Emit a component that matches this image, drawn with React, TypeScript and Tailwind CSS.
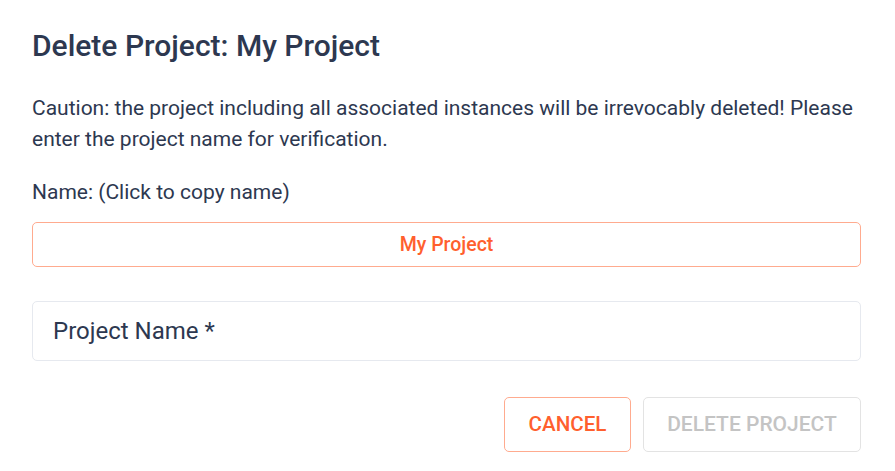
export default function App() {
    return (
        <div
            className="min-h-[471px] w-[895px] bg-white pl-8 pr-[34px] pt-[28px] text-[#2d3850]"
            style={{ fontFamily: "Roboto, 'Liberation Sans', sans-serif" }}
        >
            <h2 className="text-[30px] font-medium leading-[36px]">Delete Project: My Project</h2>

            <p className="mt-[29px] text-[21px] leading-[31px]">
                Caution: the project including all associated instances will be irrevocably deleted! Please
                enter the project name for verification.
            </p>

            <p className="mt-[25px] text-[21px] leading-[24px]">Name: (Click to copy name)</p>

            <button className="mt-[18px] flex h-[45px] w-full items-center justify-center rounded-[5px] border border-[#ffab8f] text-[19.5px] font-medium text-[#ff5f2e]">
                My Project
            </button>

            <div className="mt-[34px] flex h-[60px] w-full items-center rounded-[5px] border border-[#e6e9ef] px-[20px]">
                <span className="text-[24px] text-[#2d3850]">Project Name *</span>
            </div>

            <div className="mt-[36px] flex justify-end gap-[12px]">
                <button className="flex h-[55px] w-[127px] items-center justify-center rounded-[5px] border border-[#ffab8f] text-[20.6px] font-medium text-[#ff5f2e]">
                    CANCEL
                </button>
                <button
                    disabled
                    className="flex h-[55px] w-[218px] items-center justify-center rounded-[5px] border border-[#e3e3e3] text-[21px] font-medium text-[#c4c4c4]"
                >
                    DELETE PROJECT
                </button>
            </div>
        </div>
    );
}
